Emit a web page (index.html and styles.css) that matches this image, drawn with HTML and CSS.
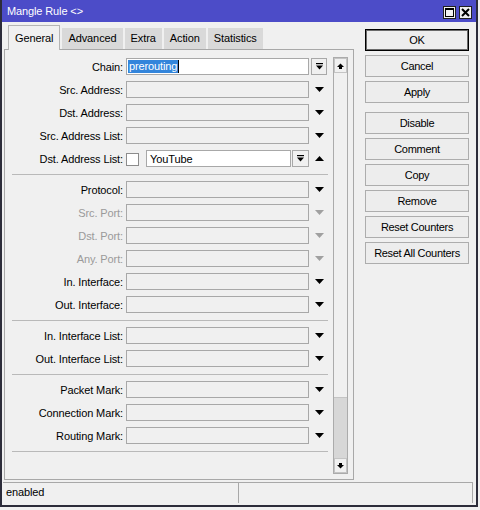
FILE: index.html
```html
<!DOCTYPE html>
<html>
<head>
<meta charset="utf-8">
<link rel="stylesheet" href="styles.css">
</head>
<body>
<div class="window">
  <div class="titlebar">
    <span class="title">Mangle Rule &lt;&gt;</span>
    <div class="caps">
      <span class="cap"><svg width="9" height="9" viewBox="0 0 9 9"><rect x="0.5" y="0.5" width="8" height="8" fill="none" stroke="#000"/><rect x="0" y="0" width="9" height="2" fill="#000"/></svg></span>
      <span class="cap"><svg width="9" height="9" viewBox="0 0 9 9"><path d="M1 1L8 8M8 1L1 8" stroke="#000" stroke-width="2"/></svg></span>
    </div>
  </div>
  <div class="main">
    <div class="leftcol">
      <div class="tabs">
        <div class="tab active">General</div>
        <div class="tab">Advanced</div>
        <div class="tab">Extra</div>
        <div class="tab">Action</div>
        <div class="tab">Statistics</div>
      </div>
      <div class="panel">
        <div class="form">
          <div class="row">
            <span class="label">Chain:</span>
            <span class="input white"><span class="sel">prerouting</span></span>
            <span class="zone left"><span class="ddbtn"><svg width="7" height="7" viewBox="0 0 7 7"><rect x="0" y="0" width="7" height="1.2"/><path d="M0 2.5h7L3.5 6.5z"/></svg></span></span>
          </div>
          <div class="row">
            <span class="label">Src. Address:</span>
            <span class="input"></span>
            <span class="zone"><svg class="tri" width="9" height="5" viewBox="0 0 9 5"><path d="M0 0h9L4.5 5z"/></svg></span>
          </div>
          <div class="row">
            <span class="label">Dst. Address:</span>
            <span class="input"></span>
            <span class="zone"><svg class="tri" width="9" height="5" viewBox="0 0 9 5"><path d="M0 0h9L4.5 5z"/></svg></span>
          </div>
          <div class="row">
            <span class="label">Src. Address List:</span>
            <span class="input"></span>
            <span class="zone"><svg class="tri" width="9" height="5" viewBox="0 0 9 5"><path d="M0 0h9L4.5 5z"/></svg></span>
          </div>
          <div class="row">
            <span class="label">Dst. Address List:</span>
            <span class="check"></span>
            <span class="input white short">YouTube</span>
            <span class="ddbtn small"><svg width="7" height="7" viewBox="0 0 7 7"><rect x="0" y="0" width="7" height="1.2"/><path d="M0 2.5h7L3.5 6.5z"/></svg></span>
            <span class="zone"><svg class="tri" width="9" height="5" viewBox="0 0 9 5"><path d="M0 5h9L4.5 0z"/></svg></span>
          </div>
          <div class="sep"></div>
          <div class="row">
            <span class="label">Protocol:</span>
            <span class="input"></span>
            <span class="zone"><svg class="tri" width="9" height="5" viewBox="0 0 9 5"><path d="M0 0h9L4.5 5z"/></svg></span>
          </div>
          <div class="row disabled">
            <span class="label">Src. Port:</span>
            <span class="input"></span>
            <span class="zone"><svg class="tri" width="9" height="5" viewBox="0 0 9 5"><path d="M0 0h9L4.5 5z"/></svg></span>
          </div>
          <div class="row disabled">
            <span class="label">Dst. Port:</span>
            <span class="input"></span>
            <span class="zone"><svg class="tri" width="9" height="5" viewBox="0 0 9 5"><path d="M0 0h9L4.5 5z"/></svg></span>
          </div>
          <div class="row disabled">
            <span class="label">Any. Port:</span>
            <span class="input"></span>
            <span class="zone"><svg class="tri" width="9" height="5" viewBox="0 0 9 5"><path d="M0 0h9L4.5 5z"/></svg></span>
          </div>
          <div class="row">
            <span class="label">In. Interface:</span>
            <span class="input"></span>
            <span class="zone"><svg class="tri" width="9" height="5" viewBox="0 0 9 5"><path d="M0 0h9L4.5 5z"/></svg></span>
          </div>
          <div class="row">
            <span class="label">Out. Interface:</span>
            <span class="input"></span>
            <span class="zone"><svg class="tri" width="9" height="5" viewBox="0 0 9 5"><path d="M0 0h9L4.5 5z"/></svg></span>
          </div>
          <div class="sep"></div>
          <div class="row">
            <span class="label">In. Interface List:</span>
            <span class="input"></span>
            <span class="zone"><svg class="tri" width="9" height="5" viewBox="0 0 9 5"><path d="M0 0h9L4.5 5z"/></svg></span>
          </div>
          <div class="row">
            <span class="label">Out. Interface List:</span>
            <span class="input"></span>
            <span class="zone"><svg class="tri" width="9" height="5" viewBox="0 0 9 5"><path d="M0 0h9L4.5 5z"/></svg></span>
          </div>
          <div class="sep"></div>
          <div class="row">
            <span class="label">Packet Mark:</span>
            <span class="input"></span>
            <span class="zone"><svg class="tri" width="9" height="5" viewBox="0 0 9 5"><path d="M0 0h9L4.5 5z"/></svg></span>
          </div>
          <div class="row">
            <span class="label">Connection Mark:</span>
            <span class="input"></span>
            <span class="zone"><svg class="tri" width="9" height="5" viewBox="0 0 9 5"><path d="M0 0h9L4.5 5z"/></svg></span>
          </div>
          <div class="row">
            <span class="label">Routing Mark:</span>
            <span class="input"></span>
            <span class="zone"><svg class="tri" width="9" height="5" viewBox="0 0 9 5"><path d="M0 0h9L4.5 5z"/></svg></span>
          </div>
          <div class="sep"></div>
        </div>
        <div class="scrollbar">
          <div class="sbtn"><svg width="7" height="6" viewBox="0 0 7 6"><path d="M0 4L3.5 0.5L7 4z"/><rect x="2" y="3.5" width="3" height="2.5"/></svg></div>
          <div class="track"><div class="thumb"></div></div>
          <div class="sbtn"><svg width="7" height="6" viewBox="0 0 7 6"><path d="M0 2L3.5 5.5L7 2z"/><rect x="2" y="0" width="3" height="2.5"/></svg></div>
        </div>
      </div>
    </div>
    <div class="buttons">
      <div class="btn default">OK</div>
      <div class="btn">Cancel</div>
      <div class="btn">Apply</div>
      <div class="btn gapped">Disable</div>
      <div class="btn">Comment</div>
      <div class="btn">Copy</div>
      <div class="btn">Remove</div>
      <div class="btn">Reset Counters</div>
      <div class="btn">Reset All Counters</div>
    </div>
  </div>
  <div class="statusbar">
    <div class="cell c1">enabled</div>
    <div class="cell c2"></div>
  </div>
</div>
</body>
</html>
```
FILE: styles.css
```css
* { box-sizing: border-box; }
html, body { margin: 0; padding: 0; }
body {
  width: 480px;
  height: 510px;
  background: #f0f0f0;
  font-family: "Liberation Sans", Arial, sans-serif;
  font-size: 11px;
  letter-spacing: -0.12px;
  color: #000;
  overflow: hidden;
}
.window {
  width: 478px;
  height: 507px;
  background: #f0f0f0;
  border: 2px solid #2c2c3a;
  border-top: none;
  display: flex;
  flex-direction: column;
}
.titlebar {
  height: 22px;
  background: #4c4cc8;
  display: flex;
  justify-content: space-between;
  align-items: flex-start;
  padding: 0 4px 0 5px;
  flex: none;
}
.title {
  color: #fff;
  font-size: 11px;
  line-height: 22px;
}
.caps {
  display: flex;
  gap: 3px;
  padding-top: 6px;
}
.cap {
  width: 13px;
  height: 13px;
  background: #f0f0f0;
  border: 1px solid #202020;
  display: flex;
  align-items: center;
  justify-content: center;
}
.main {
  display: flex;
  gap: 11px;
  padding-top: 3px;
  padding-left: 2px;
  flex: none;
}
.leftcol {
  width: 350px;
  display: flex;
  flex-direction: column;
}
.tabs {
  height: 24px;
  display: flex;
  align-items: flex-end;
  gap: 2px;
  padding-left: 4px;
  letter-spacing: -0.1px;
}
.tab {
  height: 21px;
  line-height: 20px;
  padding: 0 6px;
  background: #d9d9d9;
  color: #000;
}
.tab.active {
  height: 25px;
  margin-bottom: -1px;
  line-height: 24px;
  background: #f0f0f0;
  border: 1px solid #b4b4b4;
  border-bottom: none;
  position: relative;
  z-index: 1;
}
.panel {
  height: 431px;
  border: 1px solid #a8a8a8;
  display: flex;
  align-items: flex-start;
}
.form {
  width: 327px;
  padding-top: 5px;
  display: flex;
  flex-direction: column;
}
.row {
  height: 23px;
  display: flex;
  align-items: center;
}
.label {
  width: 118px;
  text-align: right;
  margin-right: 3px;
  white-space: nowrap;
}
.row.disabled .label { color: #9a9a9a; }
.input {
  width: 183px;
  height: 17px;
  border: 1px solid #a8a8a8;
  background: #f0f0f0;
  display: flex;
  align-items: center;
  padding-left: 1px;
  white-space: nowrap;
}
.input.white { background: #fff; }
.input.short {
  width: 145px;
  padding-left: 3px;
}
.sel {
  background: #3385db;
  color: #fff;
  height: 13px;
  line-height: 13px;
  padding: 0 1px;
  border-right: 1px solid #000;
}
.zone {
  width: 20px;
  height: 17px;
  display: flex;
  align-items: center;
  justify-content: center;
}
.zone.left { justify-content: flex-start; padding-left: 2px; }
.tri { fill: #000; display: block; }
.row.disabled .tri { fill: #a0a0a0; }
.ddbtn {
  width: 16px;
  height: 17px;
  border: 1px solid #a8a8a8;
  background: #f0f0f0;
  display: flex;
  align-items: center;
  justify-content: center;
}
.ddbtn.small {
  width: 17px;
  margin-left: 1px;
}
.ddbtn svg { fill: #000; }
.check {
  width: 13px;
  height: 13px;
  border: 1px solid #8c8c8c;
  background: #fff;
  margin-right: 7px;
  margin-top: 2px;
}
.sep {
  margin: 4px 0 3px 7px;
  width: 316px;
  height: 1px;
  background: #b9b9b9;
}
.scrollbar {
  width: 15px;
  height: 417px;
  margin: 7px 0 0 1px;
  border: 1px solid #ababab;
  display: flex;
  flex-direction: column;
  background: #f0f0f0;
}
.sbtn {
  height: 15px;
  flex: none;
  border: 1px solid #c4c4c4;
  display: flex;
  align-items: center;
  justify-content: center;
  background: #f0f0f0;
}
.sbtn svg { fill: #000; }
.track {
  flex: 1;
  display: flex;
  flex-direction: column;
  justify-content: flex-end;
}
.thumb {
  height: 61px;
  background: #d7d7d7;
  border-top: 1px solid #c4c4c4;
}
.buttons {
  width: 104px;
  margin-top: 4px;
  display: flex;
  flex-direction: column;
  gap: 4px;
  letter-spacing: -0.3px;
}
.btn {
  height: 22px;
  border: 1px solid #adadad;
  background: #ededed;
  text-align: center;
  line-height: 20px;
  white-space: nowrap;
}
.btn.default {
  border: 1px solid #000;
  box-shadow: inset 0 0 0 1px #6a6a6a;
}
.btn.gapped { margin-top: 5px; }
.statusbar {
  margin-top: 2px;
  margin-left: 1px;
  height: 21px;
  display: flex;
  flex: none;
}
.cell {
  height: 21px;
  border-top: 1px solid #a8a8a8;
  line-height: 19px;
  padding-left: 3px;
}
.c1 {
  width: 236px;
  border-right: 1px solid #a8a8a8;
}
.c2 {
  width: 234px;
  border-right: 1px solid #a8a8a8;
}
```
